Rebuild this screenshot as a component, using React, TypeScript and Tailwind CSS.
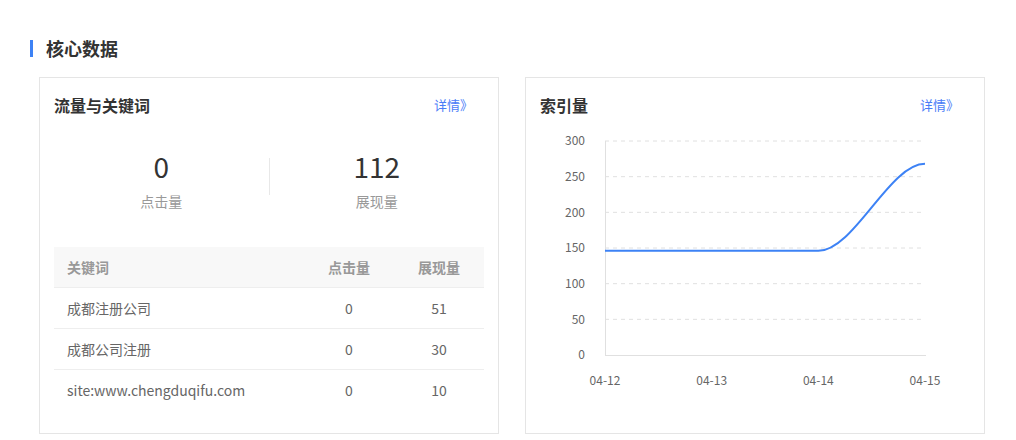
const FONT = { fontFamily: '"Noto Sans CJK SC", "Noto Sans", sans-serif' };

const keywords = [
  { word: "成都注册公司", clicks: 0, views: 51 },
  { word: "成都公司注册", clicks: 0, views: 30 },
  { word: "site:www.chengduqifu.com", clicks: 0, views: 10 },
];

const yTicks = [300, 250, 200, 150, 100, 50, 0];
const xTicks = ["04-12", "04-13", "04-14", "04-15"];

// plot box inside the svg
const X0 = 79;
const X1 = 399;
const Y0 = 235;
const Y1 = 21;
const yPos = (v: number) => Y0 - (v * (Y0 - Y1)) / 300;
const xPos = (i: number) => X0 + (i * (X1 - X0)) / 3;

function CardHeader({ title }: { title: string }) {
  return (
    <div className="flex items-center justify-between pt-[15px] pl-[14px] pr-[25px] h-[39px]">
      <h3 className="text-[16px] leading-[24px] font-bold text-[#333]">{title}</h3>
      <a className="text-[13px] leading-[24px] text-[#4a7cf7] cursor-pointer">详情》</a>
    </div>
  );
}

function IndexChart() {
  const flat = yPos(146);
  const top = yPos(268);
  const a = xPos(2);
  const b = xPos(3);
  const d = `M${X0},${flat} L${a},${flat} C${a + (b - a) / 3},${flat} ${b - (b - a) / 3},${top} ${b},${top}`;
  return (
    <svg width="458" height="290" className="mt-[3px] block">
      {yTicks.map((v) => (
        <g key={v}>
          {v > 0 && (
            <line x1={X0} x2={X1} y1={yPos(v)} y2={yPos(v)} stroke="#e0e0e0" strokeDasharray="4 4" />
          )}
          <text
            x={59}
            y={yPos(v) + 1}
            textAnchor="end"
            dominantBaseline="middle"
            fontSize="12"
            fill="#666"
            style={FONT}
          >
            {v}
          </text>
        </g>
      ))}
      <line x1={X0 + 0.5} x2={X0 + 0.5} y1={Y1} y2={Y0} stroke="#e0e0e0" />
      <line x1={X0} x2={X1 + 1} y1={Y0 + 0.5} y2={Y0 + 0.5} stroke="#e0e0e0" />
      {xTicks.map((t, i) => (
        <text
          key={t}
          x={xPos(i)}
          y={262}
          textAnchor="middle"
          dominantBaseline="middle"
          fontSize="12"
          fill="#666"
          style={FONT}
        >
          {t}
        </text>
      ))}
      <path d={d} fill="none" stroke="#3d82f5" strokeWidth="2" />
    </svg>
  );
}

export default function App() {
  return (
    <div className="w-[1016px] h-[440px] bg-white pt-[39px] pl-[30px]" style={FONT}>
      <div className="flex items-center h-[18px]">
        <span className="w-[3px] h-[17px] bg-[#3d82f5]" />
        <h2 className="ml-[13px] text-[18px] leading-[20px] font-bold text-[#333]">核心数据</h2>
      </div>

      <div className="flex gap-[26px] pl-[9px] mt-[20px]">
        {/* traffic & keywords */}
        <div className="w-[460px] h-[357px] border border-[#e5e5e5] bg-white">
          <CardHeader title="流量与关键词" />
          <div className="px-[14px]">
            <div className="flex mt-[34px]">
              <div className="flex-1 flex flex-col items-center">
                <div className="text-[28px] leading-[30px] text-[#333]">0</div>
                <div className="mt-[10px] text-[14px] leading-[20px] text-[#999]">点击量</div>
              </div>
              <div className="w-px h-[37px] mt-[7px] bg-[#e8e8e8]" />
              <div className="flex-1 flex flex-col items-center">
                <div className="text-[28px] leading-[30px] text-[#333]">112</div>
                <div className="mt-[10px] text-[14px] leading-[20px] text-[#999]">展现量</div>
              </div>
            </div>

            <div className="mt-[36px] text-[14px]">
              <div className="flex h-[41px] items-center bg-[#f8f8f8] border-b border-[#eeeeee] font-bold text-[#999]">
                <div className="w-[250px] pl-[13px]">关键词</div>
                <div className="w-[90px] text-center">点击量</div>
                <div className="w-[90px] text-center">展现量</div>
              </div>
              {keywords.map((k, i) => (
                <div
                  key={k.word}
                  className={`flex h-[41px] items-center text-[#666] ${i < keywords.length - 1 ? "border-b border-[#eeeeee]" : ""}`}
                >
                  <div className="w-[250px] pl-[13px]">{k.word}</div>
                  <div className="w-[90px] text-center">{k.clicks}</div>
                  <div className="w-[90px] text-center">{k.views}</div>
                </div>
              ))}
            </div>
          </div>
        </div>

        {/* index volume */}
        <div className="w-[460px] h-[357px] border border-[#e5e5e5] bg-white">
          <CardHeader title="索引量" />
          <IndexChart />
        </div>
      </div>
    </div>
  );
}
